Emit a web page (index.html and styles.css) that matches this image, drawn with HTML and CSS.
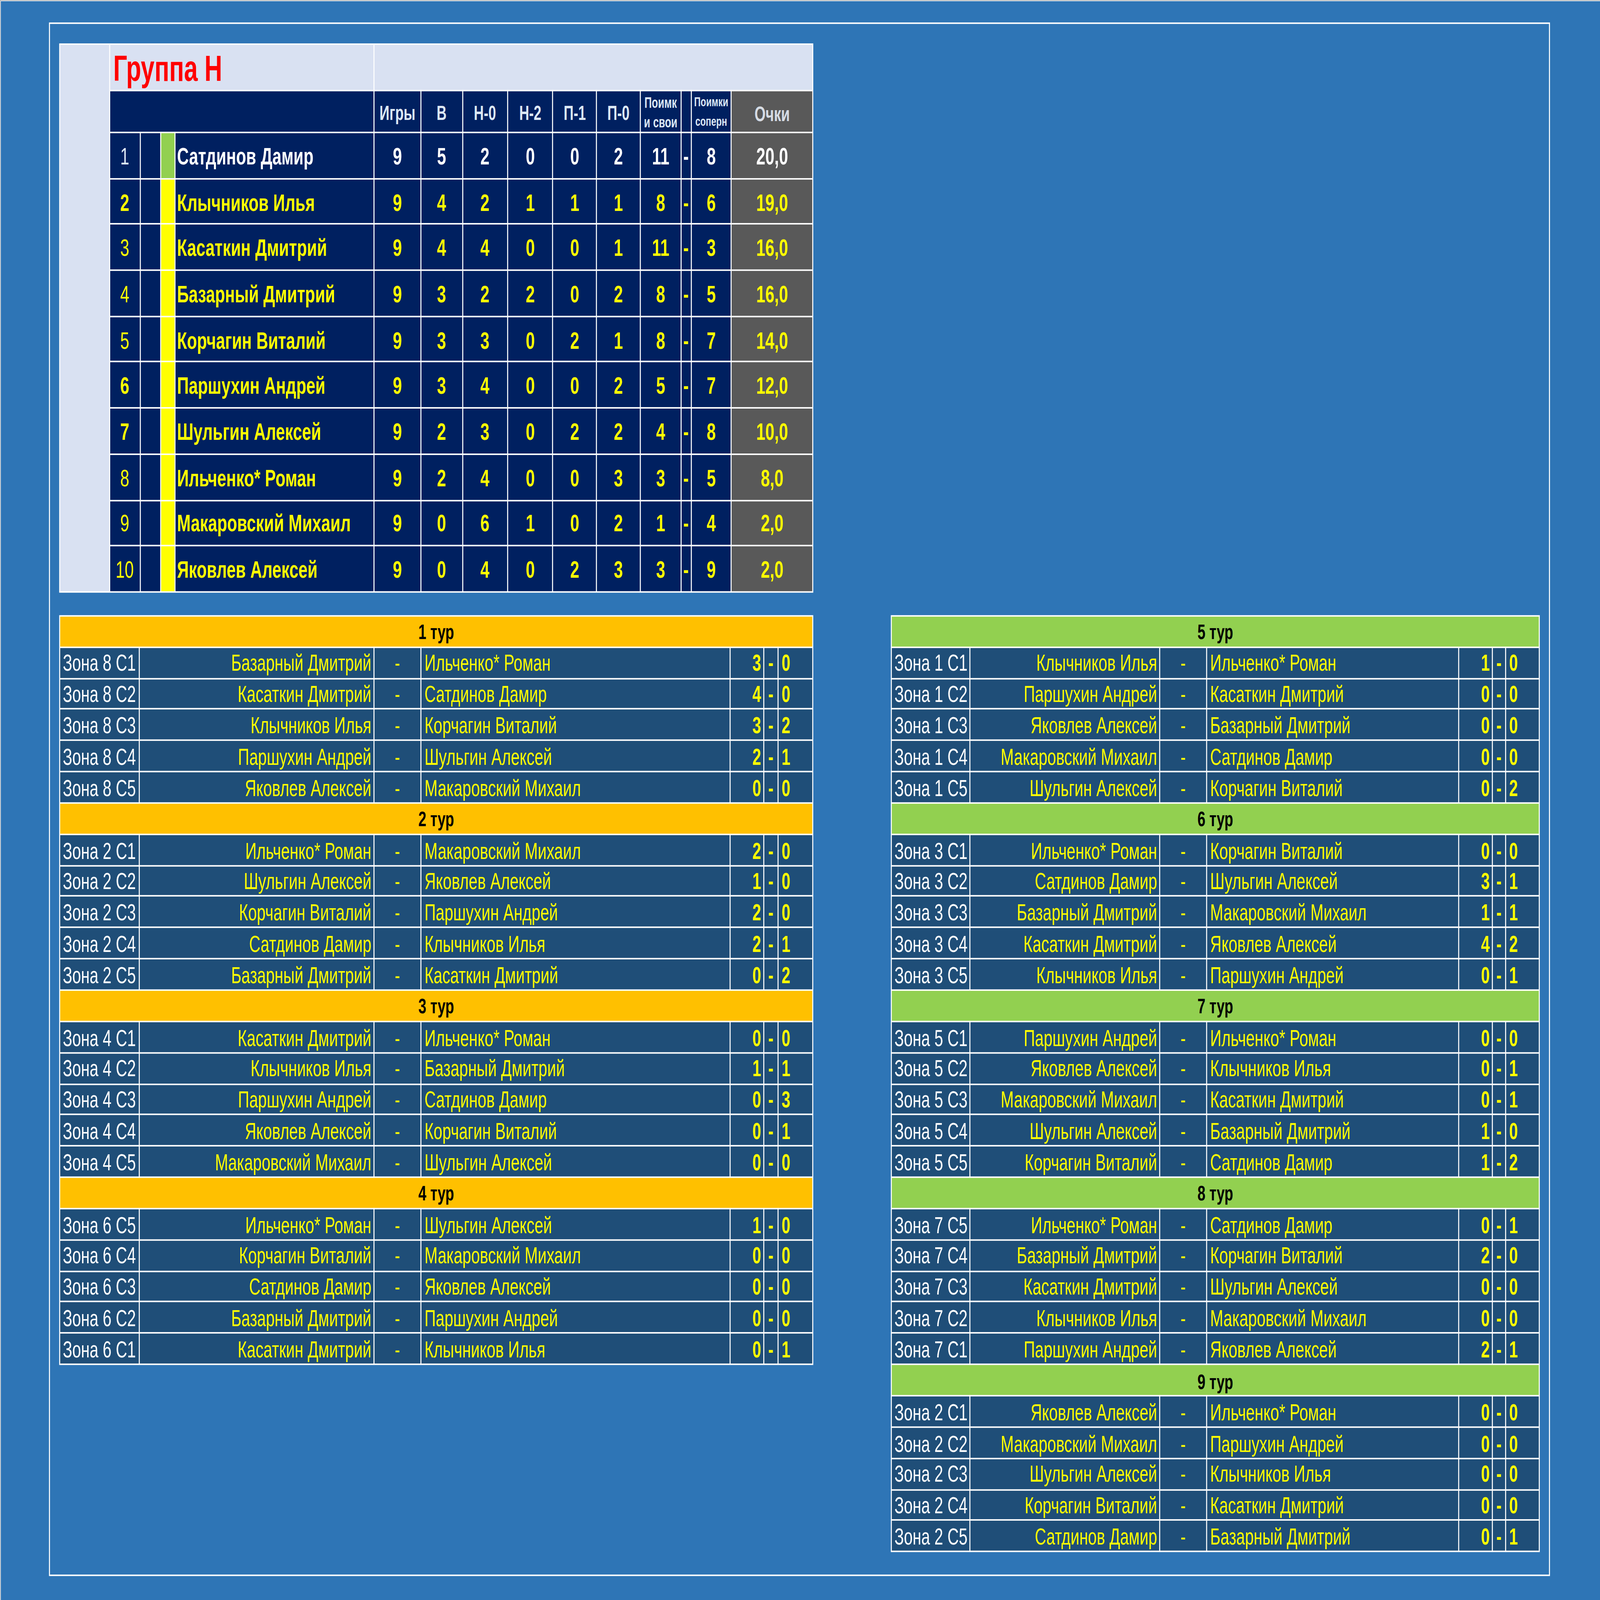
FILE: index.html
```html
<!DOCTYPE html>
<html lang="ru">
<head>
<meta charset="utf-8">
<title>Группа Н</title>
<link rel="stylesheet" href="styles.css">
</head>
<body>
<div class="viewport">
<div class="page">
  <div class="frame">
    <div class="standings">
      <div class="side"></div>
      <div class="title">Группа Н</div>
      <div class="title-rest"></div>

      <div class="hd hd-name"></div>
      <div class="hd">Игры</div>
      <div class="hd">В</div>
      <div class="hd">Н-0</div>
      <div class="hd">Н-2</div>
      <div class="hd">П-1</div>
      <div class="hd">П-0</div>
      <div class="hd hd-small">Поимк<br>и свои</div>
      <div class="hd"></div>
      <div class="hd hd-smaller">Поимки<br>соперн</div>
      <div class="hd hd-pts">Очки</div>

      <div class="c rank first">1</div><div class="c"></div><div class="c bar green"></div><div class="c name first">Сатдинов Дамир</div><div class="c num first">9</div><div class="c num first">5</div><div class="c num first">2</div><div class="c num first">0</div><div class="c num first">0</div><div class="c num first">2</div><div class="c num first">11</div><div class="c num first">-</div><div class="c num first">8</div><div class="c pts first">20,0</div>

      <div class="c rank b">2</div><div class="c"></div><div class="c bar"></div><div class="c name">Клычников Илья</div><div class="c num">9</div><div class="c num">4</div><div class="c num">2</div><div class="c num">1</div><div class="c num">1</div><div class="c num">1</div><div class="c num">8</div><div class="c num">-</div><div class="c num">6</div><div class="c pts">19,0</div>

      <div class="c rank">3</div><div class="c"></div><div class="c bar"></div><div class="c name">Касаткин Дмитрий</div><div class="c num">9</div><div class="c num">4</div><div class="c num">4</div><div class="c num">0</div><div class="c num">0</div><div class="c num">1</div><div class="c num">11</div><div class="c num">-</div><div class="c num">3</div><div class="c pts">16,0</div>

      <div class="c rank">4</div><div class="c"></div><div class="c bar"></div><div class="c name">Базарный Дмитрий</div><div class="c num">9</div><div class="c num">3</div><div class="c num">2</div><div class="c num">2</div><div class="c num">0</div><div class="c num">2</div><div class="c num">8</div><div class="c num">-</div><div class="c num">5</div><div class="c pts">16,0</div>

      <div class="c rank">5</div><div class="c"></div><div class="c bar"></div><div class="c name">Корчагин Виталий</div><div class="c num">9</div><div class="c num">3</div><div class="c num">3</div><div class="c num">0</div><div class="c num">2</div><div class="c num">1</div><div class="c num">8</div><div class="c num">-</div><div class="c num">7</div><div class="c pts">14,0</div>

      <div class="c rank b">6</div><div class="c"></div><div class="c bar"></div><div class="c name">Паршухин Андрей</div><div class="c num">9</div><div class="c num">3</div><div class="c num">4</div><div class="c num">0</div><div class="c num">0</div><div class="c num">2</div><div class="c num">5</div><div class="c num">-</div><div class="c num">7</div><div class="c pts">12,0</div>

      <div class="c rank b">7</div><div class="c"></div><div class="c bar"></div><div class="c name">Шульгин Алексей</div><div class="c num">9</div><div class="c num">2</div><div class="c num">3</div><div class="c num">0</div><div class="c num">2</div><div class="c num">2</div><div class="c num">4</div><div class="c num">-</div><div class="c num">8</div><div class="c pts">10,0</div>

      <div class="c rank">8</div><div class="c"></div><div class="c bar"></div><div class="c name">Ильченко* Роман</div><div class="c num">9</div><div class="c num">2</div><div class="c num">4</div><div class="c num">0</div><div class="c num">0</div><div class="c num">3</div><div class="c num">3</div><div class="c num">-</div><div class="c num">5</div><div class="c pts">8,0</div>

      <div class="c rank">9</div><div class="c"></div><div class="c bar"></div><div class="c name">Макаровский Михаил</div><div class="c num">9</div><div class="c num">0</div><div class="c num">6</div><div class="c num">1</div><div class="c num">0</div><div class="c num">2</div><div class="c num">1</div><div class="c num">-</div><div class="c num">4</div><div class="c pts">2,0</div>

      <div class="c rank">10</div><div class="c"></div><div class="c bar"></div><div class="c name">Яковлев Алексей</div><div class="c num">9</div><div class="c num">0</div><div class="c num">4</div><div class="c num">0</div><div class="c num">2</div><div class="c num">3</div><div class="c num">3</div><div class="c num">-</div><div class="c num">9</div><div class="c pts">2,0</div>
    </div>

    <div class="schedules">
      <div class="sched sched-left">
        <div class="tour orange">1 тур</div>
        <div class="m zone">Зона 8 С1</div><div class="m home">Базарный Дмитрий</div><div class="m vs">-</div><div class="m away">Ильченко* Роман</div><div class="m s1">3</div><div class="m sd">-</div><div class="m s2">0</div>
        <div class="m zone">Зона 8 С2</div><div class="m home">Касаткин Дмитрий</div><div class="m vs">-</div><div class="m away">Сатдинов Дамир</div><div class="m s1">4</div><div class="m sd">-</div><div class="m s2">0</div>
        <div class="m zone">Зона 8 С3</div><div class="m home">Клычников Илья</div><div class="m vs">-</div><div class="m away">Корчагин Виталий</div><div class="m s1">3</div><div class="m sd">-</div><div class="m s2">2</div>
        <div class="m zone">Зона 8 С4</div><div class="m home">Паршухин Андрей</div><div class="m vs">-</div><div class="m away">Шульгин Алексей</div><div class="m s1">2</div><div class="m sd">-</div><div class="m s2">1</div>
        <div class="m zone">Зона 8 С5</div><div class="m home">Яковлев Алексей</div><div class="m vs">-</div><div class="m away">Макаровский Михаил</div><div class="m s1">0</div><div class="m sd">-</div><div class="m s2">0</div>

        <div class="tour orange">2 тур</div>
        <div class="m zone">Зона 2 С1</div><div class="m home">Ильченко* Роман</div><div class="m vs">-</div><div class="m away">Макаровский Михаил</div><div class="m s1">2</div><div class="m sd">-</div><div class="m s2">0</div>
        <div class="m zone">Зона 2 С2</div><div class="m home">Шульгин Алексей</div><div class="m vs">-</div><div class="m away">Яковлев Алексей</div><div class="m s1">1</div><div class="m sd">-</div><div class="m s2">0</div>
        <div class="m zone">Зона 2 С3</div><div class="m home">Корчагин Виталий</div><div class="m vs">-</div><div class="m away">Паршухин Андрей</div><div class="m s1">2</div><div class="m sd">-</div><div class="m s2">0</div>
        <div class="m zone">Зона 2 С4</div><div class="m home">Сатдинов Дамир</div><div class="m vs">-</div><div class="m away">Клычников Илья</div><div class="m s1">2</div><div class="m sd">-</div><div class="m s2">1</div>
        <div class="m zone">Зона 2 С5</div><div class="m home">Базарный Дмитрий</div><div class="m vs">-</div><div class="m away">Касаткин Дмитрий</div><div class="m s1">0</div><div class="m sd">-</div><div class="m s2">2</div>

        <div class="tour orange">3 тур</div>
        <div class="m zone">Зона 4 С1</div><div class="m home">Касаткин Дмитрий</div><div class="m vs">-</div><div class="m away">Ильченко* Роман</div><div class="m s1">0</div><div class="m sd">-</div><div class="m s2">0</div>
        <div class="m zone">Зона 4 С2</div><div class="m home">Клычников Илья</div><div class="m vs">-</div><div class="m away">Базарный Дмитрий</div><div class="m s1">1</div><div class="m sd">-</div><div class="m s2">1</div>
        <div class="m zone">Зона 4 С3</div><div class="m home">Паршухин Андрей</div><div class="m vs">-</div><div class="m away">Сатдинов Дамир</div><div class="m s1">0</div><div class="m sd">-</div><div class="m s2">3</div>
        <div class="m zone">Зона 4 С4</div><div class="m home">Яковлев Алексей</div><div class="m vs">-</div><div class="m away">Корчагин Виталий</div><div class="m s1">0</div><div class="m sd">-</div><div class="m s2">1</div>
        <div class="m zone">Зона 4 С5</div><div class="m home">Макаровский Михаил</div><div class="m vs">-</div><div class="m away">Шульгин Алексей</div><div class="m s1">0</div><div class="m sd">-</div><div class="m s2">0</div>

        <div class="tour orange">4 тур</div>
        <div class="m zone">Зона 6 С5</div><div class="m home">Ильченко* Роман</div><div class="m vs">-</div><div class="m away">Шульгин Алексей</div><div class="m s1">1</div><div class="m sd">-</div><div class="m s2">0</div>
        <div class="m zone">Зона 6 С4</div><div class="m home">Корчагин Виталий</div><div class="m vs">-</div><div class="m away">Макаровский Михаил</div><div class="m s1">0</div><div class="m sd">-</div><div class="m s2">0</div>
        <div class="m zone">Зона 6 С3</div><div class="m home">Сатдинов Дамир</div><div class="m vs">-</div><div class="m away">Яковлев Алексей</div><div class="m s1">0</div><div class="m sd">-</div><div class="m s2">0</div>
        <div class="m zone">Зона 6 С2</div><div class="m home">Базарный Дмитрий</div><div class="m vs">-</div><div class="m away">Паршухин Андрей</div><div class="m s1">0</div><div class="m sd">-</div><div class="m s2">0</div>
        <div class="m zone">Зона 6 С1</div><div class="m home">Касаткин Дмитрий</div><div class="m vs">-</div><div class="m away">Клычников Илья</div><div class="m s1">0</div><div class="m sd">-</div><div class="m s2">1</div>
      </div>

      <div class="sched sched-right">
        <div class="tour green">5 тур</div>
        <div class="m zone">Зона 1 С1</div><div class="m home">Клычников Илья</div><div class="m vs">-</div><div class="m away">Ильченко* Роман</div><div class="m s1">1</div><div class="m sd">-</div><div class="m s2">0</div>
        <div class="m zone">Зона 1 С2</div><div class="m home">Паршухин Андрей</div><div class="m vs">-</div><div class="m away">Касаткин Дмитрий</div><div class="m s1">0</div><div class="m sd">-</div><div class="m s2">0</div>
        <div class="m zone">Зона 1 С3</div><div class="m home">Яковлев Алексей</div><div class="m vs">-</div><div class="m away">Базарный Дмитрий</div><div class="m s1">0</div><div class="m sd">-</div><div class="m s2">0</div>
        <div class="m zone">Зона 1 С4</div><div class="m home">Макаровский Михаил</div><div class="m vs">-</div><div class="m away">Сатдинов Дамир</div><div class="m s1">0</div><div class="m sd">-</div><div class="m s2">0</div>
        <div class="m zone">Зона 1 С5</div><div class="m home">Шульгин Алексей</div><div class="m vs">-</div><div class="m away">Корчагин Виталий</div><div class="m s1">0</div><div class="m sd">-</div><div class="m s2">2</div>

        <div class="tour green">6 тур</div>
        <div class="m zone">Зона 3 С1</div><div class="m home">Ильченко* Роман</div><div class="m vs">-</div><div class="m away">Корчагин Виталий</div><div class="m s1">0</div><div class="m sd">-</div><div class="m s2">0</div>
        <div class="m zone">Зона 3 С2</div><div class="m home">Сатдинов Дамир</div><div class="m vs">-</div><div class="m away">Шульгин Алексей</div><div class="m s1">3</div><div class="m sd">-</div><div class="m s2">1</div>
        <div class="m zone">Зона 3 С3</div><div class="m home">Базарный Дмитрий</div><div class="m vs">-</div><div class="m away">Макаровский Михаил</div><div class="m s1">1</div><div class="m sd">-</div><div class="m s2">1</div>
        <div class="m zone">Зона 3 С4</div><div class="m home">Касаткин Дмитрий</div><div class="m vs">-</div><div class="m away">Яковлев Алексей</div><div class="m s1">4</div><div class="m sd">-</div><div class="m s2">2</div>
        <div class="m zone">Зона 3 С5</div><div class="m home">Клычников Илья</div><div class="m vs">-</div><div class="m away">Паршухин Андрей</div><div class="m s1">0</div><div class="m sd">-</div><div class="m s2">1</div>

        <div class="tour green">7 тур</div>
        <div class="m zone">Зона 5 С1</div><div class="m home">Паршухин Андрей</div><div class="m vs">-</div><div class="m away">Ильченко* Роман</div><div class="m s1">0</div><div class="m sd">-</div><div class="m s2">0</div>
        <div class="m zone">Зона 5 С2</div><div class="m home">Яковлев Алексей</div><div class="m vs">-</div><div class="m away">Клычников Илья</div><div class="m s1">0</div><div class="m sd">-</div><div class="m s2">1</div>
        <div class="m zone">Зона 5 С3</div><div class="m home">Макаровский Михаил</div><div class="m vs">-</div><div class="m away">Касаткин Дмитрий</div><div class="m s1">0</div><div class="m sd">-</div><div class="m s2">1</div>
        <div class="m zone">Зона 5 С4</div><div class="m home">Шульгин Алексей</div><div class="m vs">-</div><div class="m away">Базарный Дмитрий</div><div class="m s1">1</div><div class="m sd">-</div><div class="m s2">0</div>
        <div class="m zone">Зона 5 С5</div><div class="m home">Корчагин Виталий</div><div class="m vs">-</div><div class="m away">Сатдинов Дамир</div><div class="m s1">1</div><div class="m sd">-</div><div class="m s2">2</div>

        <div class="tour green">8 тур</div>
        <div class="m zone">Зона 7 С5</div><div class="m home">Ильченко* Роман</div><div class="m vs">-</div><div class="m away">Сатдинов Дамир</div><div class="m s1">0</div><div class="m sd">-</div><div class="m s2">1</div>
        <div class="m zone">Зона 7 С4</div><div class="m home">Базарный Дмитрий</div><div class="m vs">-</div><div class="m away">Корчагин Виталий</div><div class="m s1">2</div><div class="m sd">-</div><div class="m s2">0</div>
        <div class="m zone">Зона 7 С3</div><div class="m home">Касаткин Дмитрий</div><div class="m vs">-</div><div class="m away">Шульгин Алексей</div><div class="m s1">0</div><div class="m sd">-</div><div class="m s2">0</div>
        <div class="m zone">Зона 7 С2</div><div class="m home">Клычников Илья</div><div class="m vs">-</div><div class="m away">Макаровский Михаил</div><div class="m s1">0</div><div class="m sd">-</div><div class="m s2">0</div>
        <div class="m zone">Зона 7 С1</div><div class="m home">Паршухин Андрей</div><div class="m vs">-</div><div class="m away">Яковлев Алексей</div><div class="m s1">2</div><div class="m sd">-</div><div class="m s2">1</div>

        <div class="tour green">9 тур</div>
        <div class="m zone">Зона 2 С1</div><div class="m home">Яковлев Алексей</div><div class="m vs">-</div><div class="m away">Ильченко* Роман</div><div class="m s1">0</div><div class="m sd">-</div><div class="m s2">0</div>
        <div class="m zone">Зона 2 С2</div><div class="m home">Макаровский Михаил</div><div class="m vs">-</div><div class="m away">Паршухин Андрей</div><div class="m s1">0</div><div class="m sd">-</div><div class="m s2">0</div>
        <div class="m zone">Зона 2 С3</div><div class="m home">Шульгин Алексей</div><div class="m vs">-</div><div class="m away">Клычников Илья</div><div class="m s1">0</div><div class="m sd">-</div><div class="m s2">0</div>
        <div class="m zone">Зона 2 С4</div><div class="m home">Корчагин Виталий</div><div class="m vs">-</div><div class="m away">Касаткин Дмитрий</div><div class="m s1">0</div><div class="m sd">-</div><div class="m s2">0</div>
        <div class="m zone">Зона 2 С5</div><div class="m home">Сатдинов Дамир</div><div class="m vs">-</div><div class="m away">Базарный Дмитрий</div><div class="m s1">0</div><div class="m sd">-</div><div class="m s2">1</div>
      </div>
    </div>
  </div>
</div>
</div>
<script src="script.js"></script>
</body>
</html>
```

FILE: styles.css
```css
html, body {
  margin: 0;
  padding: 0;
  height: 100%;
  background: #2e75b6;
}

body {
  font-family: "Liberation Sans", Arial, sans-serif;
}

/* Full-viewport box that holds the fitted sheet */
.viewport {
  width: 100vw;
  height: 100vh;
  overflow: hidden;
  background: #2e75b6;
}

/* The sheet is authored at 1568 x 1069 and fitted to the viewport */
.page {
  width: 1568px;
  height: 1069px;
  transform-origin: 0 0;
  transform: scale(var(--sx, 2.6122), var(--sy, 3.8316));
  background: #2e75b6;
  box-shadow: inset 0.3px 0.3px 0 #8c8c8c, inset 0.8px 0.8px 0 #ffffff;
  padding-top: 15px;
  box-sizing: border-box;
}

.frame {
  margin-left: 48px;
  width: 1471px;
  height: 1038px;
  border: 1px solid #ffffff;
  box-sizing: border-box;
  padding: 13px 0 0 9px;
}

/* ---------- Standings ---------- */
.standings {
  display: grid;
  grid-template-columns: 48px 28.5px 19.5px 12.5px 194.5px 45px 39.5px 43.5px 43.4px 41.8px 41.8px 39px 8.6px 38.9px 78.5px;
  grid-template-rows: 30px 27px repeat(10, 29.7px);
  gap: 1px;
  padding: 1px;
  background: #ffffff;
  width: max-content;
}

.side {
  grid-column: 1;
  grid-row: 1 / -1;
  background: #d9e1f2;
}

.title {
  grid-column: 2 / 6;
  background: #d9e1f2;
  color: #ff0000;
  font-weight: bold;
  font-size: 24px;
  line-height: 1;
  display: flex;
  align-items: center;
  padding-left: 3px;
  padding-top: 2px;
}

.title-rest {
  grid-column: 6 / 16;
  background: #d9e1f2;
}

.hd {
  background: #002060;
  color: #dde8f5;
  font-weight: bold;
  font-size: 13.5px;
  line-height: 1;
  display: flex;
  align-items: center;
  justify-content: center;
  text-align: center;
  padding-top: 3px;
  box-sizing: border-box;
}

.hd-name {
  grid-column: 2 / 6;
}

.hd-small {
  font-size: 10px;
  line-height: 1.3;
  padding-top: 0;
}

.hd-smaller {
  font-size: 8.8px;
  line-height: 1.4;
  padding-top: 0;
}

.hd-pts {
  background: #595959;
  color: #d6dce4;
  font-size: 14px;
}

.c {
  background: #002060;
  color: #ffff00;
  font-size: 16px;
  line-height: 1;
  display: flex;
  align-items: center;
  padding-top: 2px;
  box-sizing: border-box;
}

.c.first {
  color: #ffffff;
}

.rank {
  justify-content: center;
}

.rank.first {
  color: #dde8f5;
}

.rank.b {
  font-weight: bold;
}

.bar {
  background: #ffff00;
}

.bar.green {
  background: #92d050;
}

.name {
  font-weight: bold;
  padding-left: 2px;
}

.num {
  font-weight: bold;
  justify-content: center;
}

.pts {
  background: #595959;
  font-weight: bold;
  justify-content: center;
}

/* ---------- Schedules ---------- */
.schedules {
  display: flex;
  align-items: flex-start;
  gap: 76px;
  margin-top: 15px;
}

.sched {
  display: grid;
  grid-auto-rows: 19.85px;
  gap: 1px;
  padding: 1px;
  background: #ffffff;
}

.sched-left {
  grid-template-columns: 77px 229px 45px 302px 32px 13px 33px;
}

.sched-right {
  grid-template-columns: 76px 185px 45px 246px 32px 12px 32px;
}

.tour {
  grid-column: 1 / -1;
  color: #000000;
  font-weight: bold;
  font-size: 14px;
  line-height: 1;
  display: flex;
  align-items: center;
  justify-content: center;
  padding-top: 1px;
}

.tour.orange {
  background: #ffc000;
}

.tour.green {
  background: #92d050;
}

.m {
  background: #1f4e78;
  color: #ffff00;
  font-size: 15.4px;
  line-height: 1;
  display: flex;
  align-items: center;
  white-space: nowrap;
  overflow: hidden;
  padding-top: 1px;
  box-sizing: border-box;
}

.zone {
  color: #ffffff;
  padding-left: 2.5px;
}

.home {
  justify-content: flex-end;
  padding-right: 2px;
}

.vs {
  justify-content: center;
}

.away {
  padding-left: 3px;
}

.s1 {
  font-weight: bold;
  justify-content: flex-end;
  padding-right: 2px;
}

.sd {
  font-weight: bold;
  justify-content: center;
}

.s2 {
  font-weight: bold;
  padding-left: 3px;
}
```

FILE: script.js
```js
(function () {
  function fit() {
    var root = document.documentElement;
    root.style.setProperty('--sx', String(window.innerWidth / 1568));
    root.style.setProperty('--sy', String(window.innerHeight / 1069));
  }
  fit();
  window.addEventListener('resize', fit);
})();
```
